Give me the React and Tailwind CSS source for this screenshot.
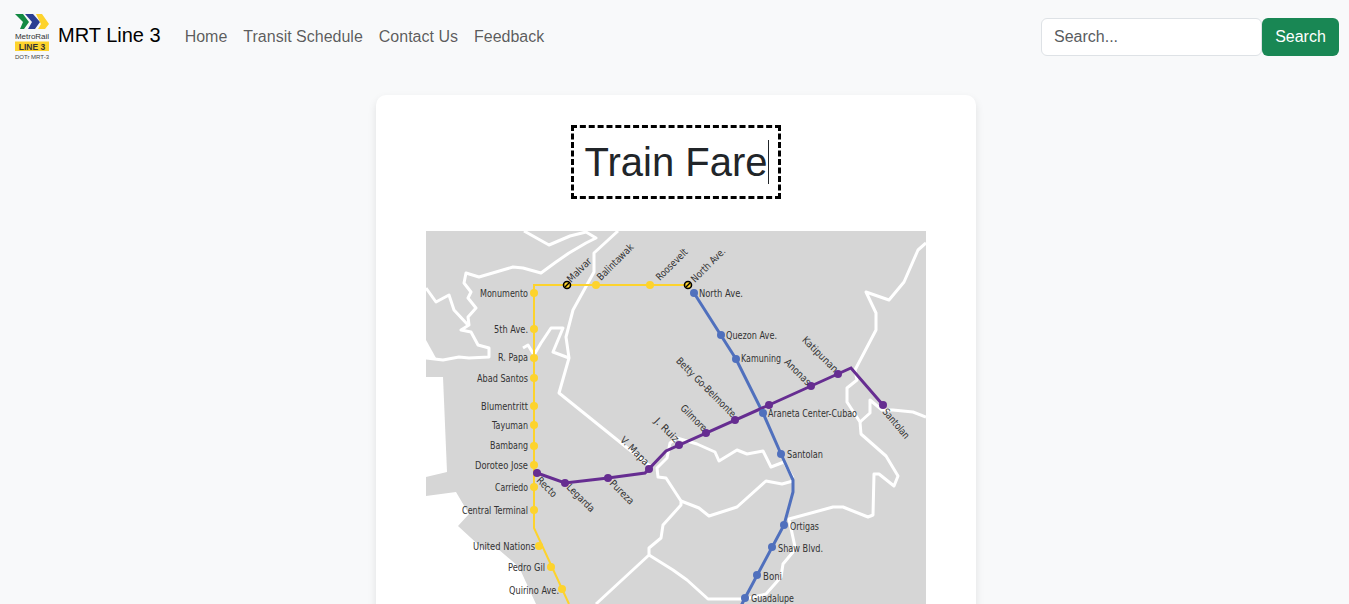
import React from "react";

// road and coast outlines, in page pixels (viewBox is offset to match)
const roads = [
  "M524 231 L549 245 L570 236 L586 232 L596 238 L586 243 L569 253 L556 262 L541 273 L523 268 L513 267 L496 272 L479 277 L466 273 L464 283 L471 292 L468 298 L476 308 L468 317 L469 325 L461 330 L471 332 L478 345 L489 348 L489 357 L469 358 L459 357 L443 360 L426 358",
  "M426 288 L436 302 L449 295 L454 310 L468 325",
  "M618 231 L594 253 L594 272 L573 310 L566 337 L569 358 L559 393 L626 447 L650 466",
  "M523 348 L528 345 L534 355 L541 343 L551 328 L563 328 L553 352 L569 358",
  "M926 243 L918 250 L904 282 L889 300 L866 292 L876 313 L876 330 L855 370 L857 380 L847 388 L847 402 L860 422 L861 434 L886 456 L898 476 L894 486 L879 474 L874 474 L873 515 L868 517 L843 507 L833 507 L789 519 L795 547 L793 552 L783 564 L781 577 L766 594 L745 599 L726 599 L708 599 L687 580 L673 570 L649 555",
  "M860 422 L870 413 L870 400 L882 410 L893 410 L913 412 L926 417",
  "M677 438 L670 443 L667 458 L657 468 L658 477 L666 478 L681 501 L681 505 L663 525 L661 538 L649 548 L649 555 L596 604",
  "M681 501 L699 508 L709 516 L737 507 L766 481 L782 484 L793 481",
  "M677 438 L697 444 L715 452 L719 461 L737 450 L747 454 L763 451 L771 467 L784 462 L793 478",
];

const coast = [
  "M426 340 L436 358 L426 358 Z",
  "M426 377 L443 377 L447 472 L426 477 Z",
  "M426 496 L456 492 L469 514 L458 526 L483 549 L498 549 L519 567 L536 604 L426 604 Z",
];

const stations = [
  [534, 293, "#fdd32d"], [534, 329, "#fdd32d"], [534, 358, "#fdd32d"], [534, 378, "#fdd32d"],
  [534, 406, "#fdd32d"], [534, 425, "#fdd32d"], [534, 446, "#fdd32d"], [534, 465, "#fdd32d"],
  [534, 487, "#fdd32d"], [534, 510, "#fdd32d"], [539, 546, "#fdd32d"], [551, 567, "#fdd32d"],
  [562, 589, "#fdd32d"], [596, 285, "#fdd32d"], [650, 285, "#fdd32d"],
  [694, 293, "#5070bd"], [721, 335, "#5070bd"], [736, 359, "#5070bd"], [763, 413, "#5070bd"],
  [781, 454, "#5070bd"], [784, 525, "#5070bd"], [772, 547, "#5070bd"], [757, 575, "#5070bd"],
  [745, 598, "#5070bd"],
  [537, 473, "#662d91"], [565, 483, "#662d91"], [608, 478, "#662d91"], [649, 469, "#662d91"],
  [679, 445, "#662d91"], [706, 433, "#662d91"], [735, 420, "#662d91"], [769, 405, "#662d91"],
  [811, 386, "#662d91"], [838, 374, "#662d91"], [883, 405, "#662d91"],
];

// text, x, y, width, anchor, rotation
const labels = [
  ["Monumento", 528, 297, 48, "end"], ["5th Ave.", 528, 333, 34, "end"], ["R. Papa", 528, 361, 30, "end"],
  ["Abad Santos", 528, 382, 51, "end"], ["Blumentritt", 528, 410, 47, "end"], ["Tayuman", 528, 429, 36, "end"],
  ["Bambang", 528, 449, 38, "end"], ["Doroteo Jose", 528, 469, 53, "end"], ["Carriedo", 528, 491, 33, "end"],
  ["Central Terminal", 528, 514, 66, "end"], ["United Nations", 535, 550, 62, "end"], ["Pedro Gil", 545, 571, 37, "end"],
  ["Quirino Ave.", 559, 594, 50, "end"],
  ["North Ave.", 699, 297, 44], ["Quezon Ave.", 726, 339, 51], ["Kamuning", 741, 362, 40],
  ["Araneta Center-Cubao", 768, 417, 89], ["Santolan", 787, 458, 36], ["Ortigas", 790, 530, 29],
  ["Shaw Blvd.", 778, 552, 45], ["Boni", 763, 580, 19], ["Guadalupe", 751, 602, 43],
  ["Malvar", 571, 283, 30, "start", -45], ["Balintawak", 601, 281, 47, "start", -45],
  ["Roosevelt", 660, 281, 40, "start", -45], ["North Ave.", 695, 283, 44, "start", -45],
  ["Recto", 536, 481, 24, "start", 45], ["Legarda", 566, 488, 35, "start", 45], ["Pureza", 609, 484, 30, "start", 45],
  ["Santolan", 882, 412, 36, "start", 50],
  ["V. Mapa", 645, 466, 36, "end", 45], ["J. Ruiz", 675, 443, 30, "end", 45], ["Gilmore", 703, 432, 33, "end", 45],
  ["Betty Go-Belmonte", 732, 418, 80, "end", 45], ["Anonas", 807, 386, 33, "end", 45], ["Katipunan", 834, 373, 46, "end", 45],
];

const TransitMap = () => (
  <svg viewBox="426 231 500 500" className="block w-[500px] h-[500px] mx-auto bg-[#d6d6d6]">
    {coast.map((d, i) => (
      <path key={i} d={d} fill="#fff" />
    ))}
    {roads.map((d, i) => (
      <path key={i} d={d} fill="none" stroke="#fff" strokeWidth="3" strokeLinejoin="round" />
    ))}
    <path d="M534 465 L534 285 L688 285 M534 465 L534 528 L569 604" fill="none" stroke="#fdd32d" strokeWidth="2" />
    <path
      d="M694 293 L736 359 L763 413 L781 454 L793 480 L793 492 L784 525 L745 598 L738 612"
      fill="none"
      stroke="#5070bd"
      strokeWidth="3"
    />
    <path
      d="M537 473 L565 483 L608 478 L645 473 L666 451 L769 405 L851 368 L883 405"
      fill="none"
      stroke="#662d91"
      strokeWidth="3"
    />
    {stations.map(([x, y, c], i) => (
      <circle key={i} cx={x} cy={y} r="4" fill={c} />
    ))}
    {[[567, 285], [688, 285]].map(([x, y], i) => (
      <g key={i}>
        <circle cx={x} cy={y} r="3.5" fill="#fdd32d" stroke="#000" strokeWidth="1.6" />
        <path d={`M${x - 2} ${y + 2} L${x + 2} ${y - 2}`} stroke="#000" strokeWidth="1.4" />
      </g>
    ))}
    {labels.map(([t, x, y, len, anchor, rot], i) => (
      <text
        key={i}
        x={x}
        y={y}
        fontSize="10"
        fontFamily="'DejaVu Sans', sans-serif"
        fill="#333"
        textAnchor={anchor || "start"}
        textLength={len}
        lengthAdjust="spacingAndGlyphs"
        transform={rot ? `rotate(${rot} ${x} ${y})` : undefined}
      >
        {t}
      </text>
    ))}
  </svg>
);

const Logo = () => (
  <svg viewBox="0 0 36 48" className="w-9 h-12 shrink-0">
    <path d="M1 1 H9 L15 9 L10 16 H6 L9 9 Z" fill="#138a43" />
    <path d="M11 1 H19 L26 9 L21 16 H14 L18 9 Z" fill="#2c3f93" />
    <path d="M22 1 H28 L35 11 L31 16 H24 L27 11 Z" fill="#fdd32d" />
    <text x="18" y="26" fontSize="8" textAnchor="middle" fontFamily="'Liberation Sans', sans-serif" fill="#333">
      MetroRail
    </text>
    <rect x="1" y="28.500" width="34" height="9.500" fill="#fdd32d" />
    <text x="18" y="36.500" fontSize="8.500" fontWeight="700" textAnchor="middle" fontFamily="'Liberation Sans', sans-serif" fill="#333">
      LINE 3
    </text>
    <text x="18" y="45.500" fontSize="6" textAnchor="middle" fontFamily="'Liberation Sans', sans-serif" fill="#444">
      DOTr MRT-3
    </text>
  </svg>
);

const App = () => {
  const links = ["Home", "Transit Schedule", "Contact Us", "Feedback"];

  return (
    <div className="min-h-screen bg-[#f8f9fa] font-['Liberation_Sans',Arial,sans-serif] text-[#212529]">
      <nav className="flex items-center justify-between h-[73px] pl-[14px] pr-[10px]">
        <div className="flex items-center">
          <Logo />
          <a className="ml-2 mr-4 mb-1 text-[20px] text-black">MRT Line 3</a>
          <ul className="flex items-center">
            {links.map((link) => (
              <li key={link} className="px-2 text-base text-[#000000a6]">
                {link}
              </li>
            ))}
          </ul>
        </div>
        <form className="flex items-center">
          <input
            placeholder="Search..."
            className="w-[221px] h-[38px] px-3 text-base bg-white border border-[#dee2e6] rounded-[6px] placeholder:text-[#595c5f] outline-none"
          />
          <button type="button" className="w-[77px] h-[38px] text-base text-white bg-[#198754] rounded-[6px]">
            Search
          </button>
        </form>
      </nav>

      <div className="flex justify-center pl-[3px] pt-[22px] pb-8">
        <div className="w-[600px] bg-white rounded-[10px] shadow-[0_4px_8px_rgba(0,0,0,0.1)] pt-[30px] pb-[30px] text-center">
          <h1 className="inline-block border-[3px] border-dashed border-black pl-[10px] pr-[9px] py-[10px] text-[40px] leading-[48px] font-normal">
            <span className="border-r border-[#212529]">Train Fare</span>
          </h1>
          <div className="mt-[32px]">
            <TransitMap />
          </div>
        </div>
      </div>
    </div>
  );
};

export default App;
